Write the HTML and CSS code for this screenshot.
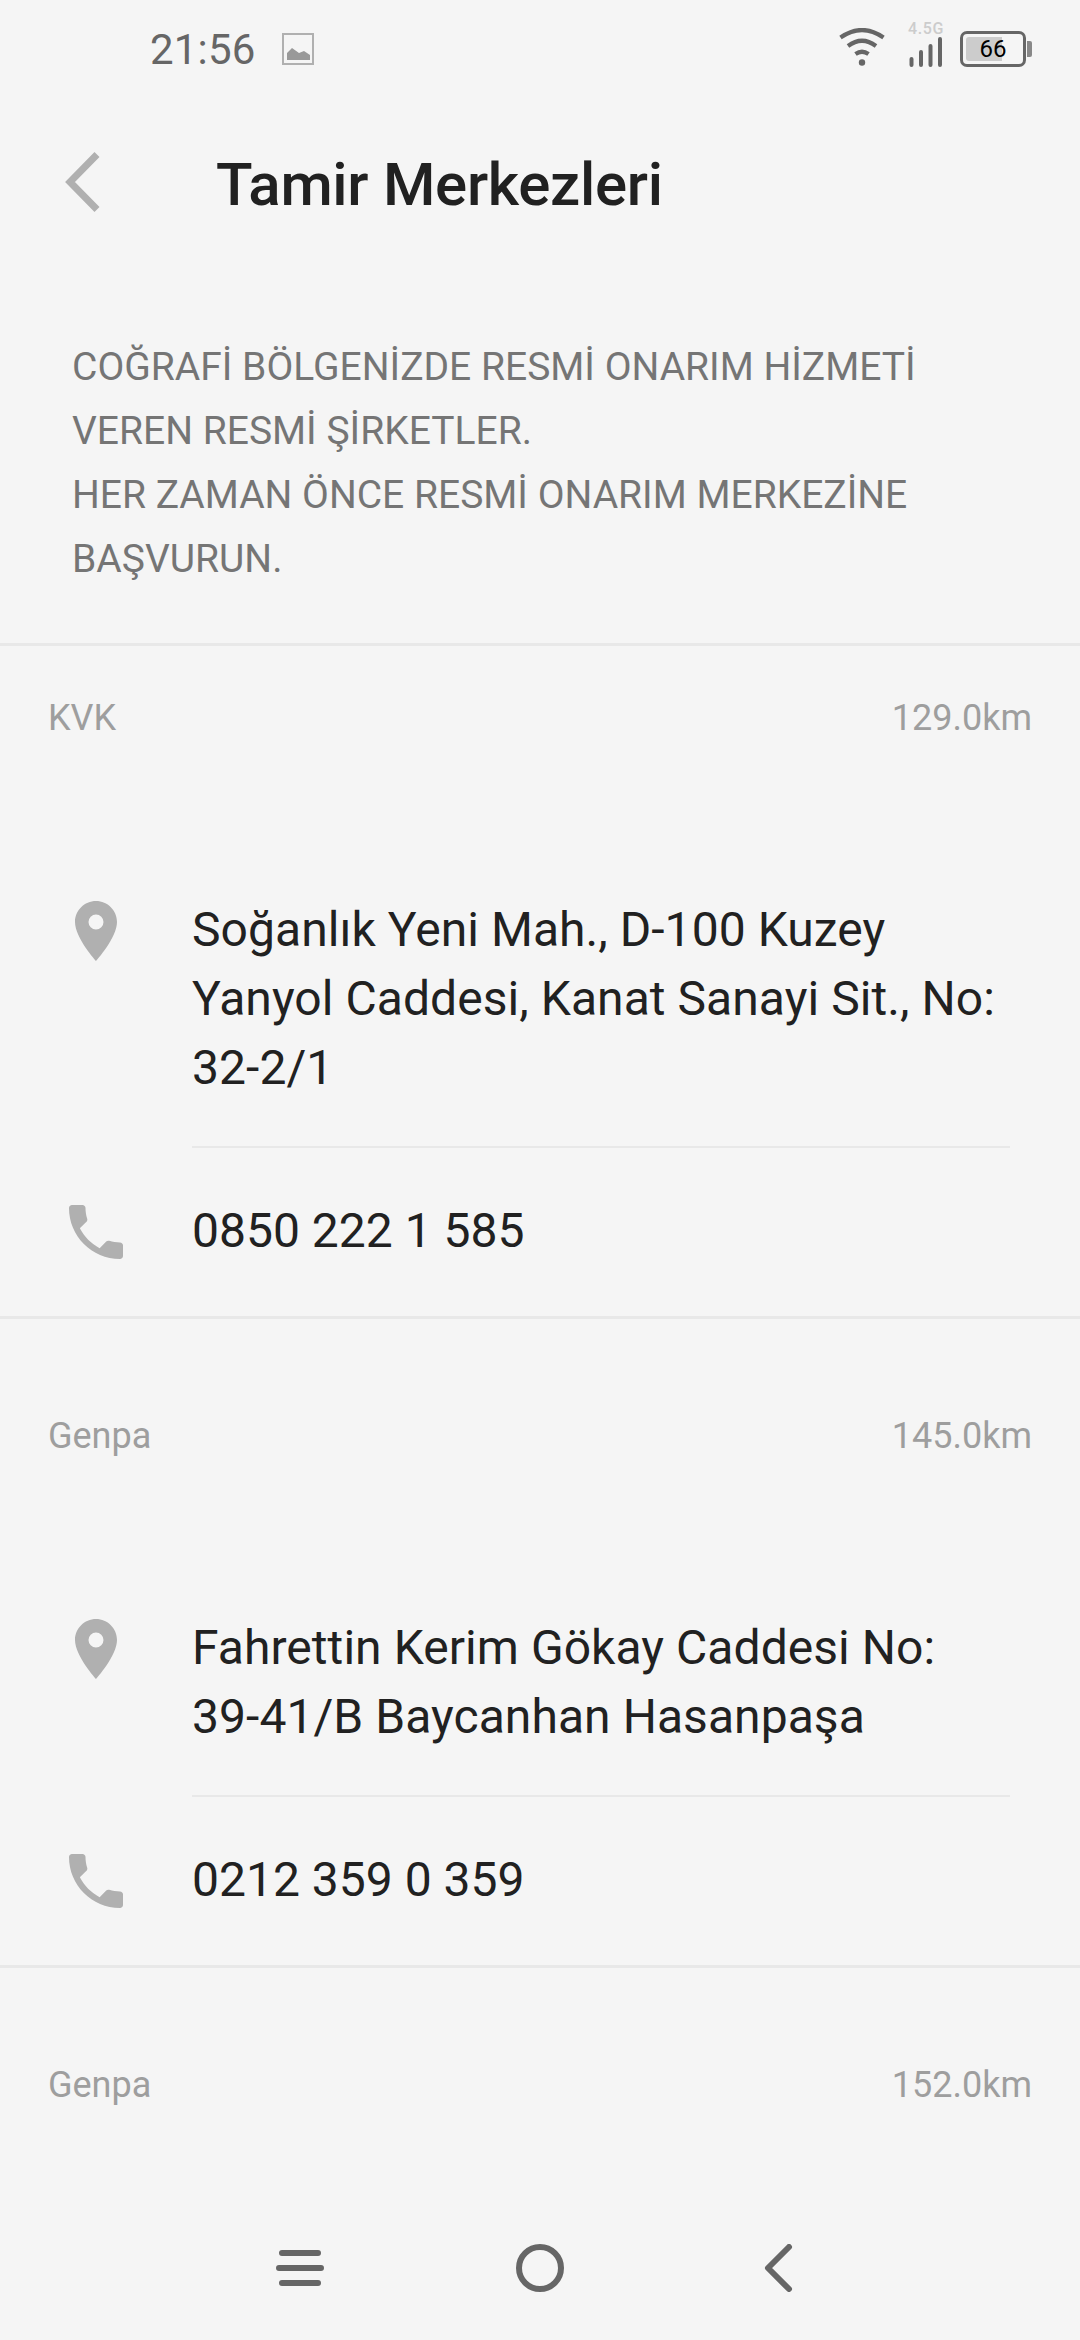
FILE: index.html
```html
<!DOCTYPE html>
<html lang="tr">
<head>
<meta charset="utf-8">
<title>Tamir Merkezleri</title>
<link rel="stylesheet" href="styles.css">
</head>
<body>
<div class="screen">
  <header class="status">
    <span class="clock">21:56</span>
    <svg class="picture" viewBox="0 0 32 32"><rect x="1" y="1" width="30" height="30" fill="none" stroke="#b0b0b0" stroke-width="2"/><path d="M5 27v-7l5-5 7 5 5-2 6 4v5z" fill="#999"/></svg>
    <svg class="wifi" viewBox="0 0 46 38"><g fill="none" stroke="#666" stroke-width="4.200"><path d="M1.500 9.500Q23-5.500 44.500 9.500M9 18Q23 7.500 37 18M16.500 26Q23 21.500 29.500 26"/></g><circle cx="23" cy="34.500" r="3.200" fill="#666"/></svg>
    <div class="signal"><span class="net">4.5G</span><svg class="bars" viewBox="0 0 36 30"><path d="M3.500 22v6M13 15v13M22.500 9v19M32 2v26" stroke="#666" stroke-width="4" stroke-linecap="round"/></svg></div>
    <div class="battery"><span class="level">66</span></div><span class="nub"></span>
  </header>
  <div class="titlebar">
    <svg class="back" viewBox="0 0 36 60"><path d="M32 2.500L5 30l27 27.500" fill="none" stroke="#b0b0b0" stroke-width="7"/></svg>
    <h1>Tamir Merkezleri</h1>
  </div>
  <p class="intro">COĞRAFİ BÖLGENİZDE RESMİ ONARIM HİZMETİ<br>VEREN RESMİ ŞİRKETLER.<br>HER ZAMAN ÖNCE RESMİ ONARIM MERKEZİNE<br>BAŞVURUN.</p>
  <section class="center first">
    <div class="head"><span>KVK</span><span>129.0km</span></div>
    <div class="address"><svg class="icon" viewBox="0 0 24 24"><path d="M12 2C8.130 2 5 5.130 5 9c0 5.250 7 13 7 13s7-7.750 7-13c0-3.870-3.130-7-7-7zm0 9.500a2.500 2.500 0 1 1 0-5 2.500 2.500 0 0 1 0 5z"/></svg><p>Soğanlık Yeni Mah., D-100 Kuzey<br>Yanyol Caddesi, Kanat Sanayi Sit., No:<br>32-2/1</p></div>
    <div class="phone"><svg class="icon" viewBox="0 0 24 24"><path d="M6.620 10.790c1.440 2.830 3.760 5.140 6.590 6.590l2.200-2.200c.27-.27.67-.36 1.020-.24 1.120.37 2.330.57 3.570.57.55 0 1 .45 1 1V20c0 .55-.45 1-1 1-9.390 0-17-7.610-17-17 0-.55.45-1 1-1h3.500c.55 0 1 .45 1 1 0 1.250.2 2.450.57 3.570.11.35.03.74-.25 1.020z"/></svg><span>0850 222 1 585</span></div>
  </section>
  <section class="center">
    <div class="head"><span>Genpa</span><span>145.0km</span></div>
    <div class="address"><svg class="icon" viewBox="0 0 24 24"><path d="M12 2C8.130 2 5 5.130 5 9c0 5.250 7 13 7 13s7-7.750 7-13c0-3.870-3.130-7-7-7zm0 9.500a2.500 2.500 0 1 1 0-5 2.500 2.500 0 0 1 0 5z"/></svg><p>Fahrettin Kerim Gökay Caddesi No:<br>39-41/B Baycanhan Hasanpaşa</p></div>
    <div class="phone"><svg class="icon" viewBox="0 0 24 24"><path d="M6.620 10.790c1.440 2.830 3.760 5.140 6.590 6.590l2.200-2.200c.27-.27.67-.36 1.020-.24 1.120.37 2.330.57 3.570.57.55 0 1 .45 1 1V20c0 .55-.45 1-1 1-9.390 0-17-7.610-17-17 0-.55.45-1 1-1h3.500c.55 0 1 .45 1 1 0 1.250.2 2.450.57 3.570.11.35.03.74-.25 1.020z"/></svg><span>0212 359 0 359</span></div>
  </section>
  <section class="center last">
    <div class="head"><span>Genpa</span><span>152.0km</span></div>
  </section>
  <nav class="nav">
    <svg viewBox="0 0 48 48"><path d="M6 9h36M3 24h42M6 39h36"/></svg>
    <svg viewBox="0 0 48 48"><circle cx="24" cy="24" r="21"/></svg>
    <svg viewBox="0 0 48 48"><path d="M33 3L12 24l21 21"/></svg>
  </nav>
</div>
</body>
</html>
```
FILE: styles.css
```css
* { box-sizing: border-box; }
body { margin: 0; background: #f5f5f5; font-family: Roboto, sans-serif; color: #212121; }
p, h1 { margin: 0; }
svg { display: block; flex: none; }
.screen { width: 1080px; height: 2340px; display: flex; flex-direction: column; overflow: hidden; }
.status { height: 98px; flex: none; display: flex; align-items: center; padding: 0 48px 0 150px; }
.clock { font-size: 42px; color: #666; width: 132px; padding-top: 1px; letter-spacing: 0.2px; }
.picture { width: 32px; height: 32px; }
.wifi { width: 46px; height: 38px; margin-left: auto; margin-bottom: 4px; }
.signal { width: 36px; height: 46px; margin-left: 23px; margin-bottom: 11px; display: flex; flex-direction: column; justify-content: space-between; }
.net { font-size: 16px; line-height: 16px; font-weight: 500; letter-spacing: 0.6px; color: #ccc; }
.bars { width: 36px; height: 30px; }
.battery { width: 66px; height: 36px; flex: none; margin-left: 16px; border: 3px solid #666; border-radius: 7px; padding: 3px; }
.level { display: block; height: 24px; font-size: 24px; line-height: 24px; text-align: center; border-radius: 3px; color: #000; background: linear-gradient(90deg, #ccc 66%, transparent 66%); }
.nub { width: 5px; height: 16px; margin-left: 1px; background: #888; border-radius: 0 2px 2px 0; }
.titlebar { height: 171px; flex: none; display: flex; align-items: center; padding: 0 65px; }
.back { width: 36px; height: 60px; margin-bottom: 3px; }
h1 { font-size: 60px; font-weight: 500; letter-spacing: -0.3px; margin-left: 115px; padding-top: 2px; }
.intro { height: 377px; flex: none; padding: 66px 72px 0; font-size: 39px; line-height: 64px; color: #757575; border-bottom: 3px solid #e8e8e8; }
.center { flex: none; padding-top: 69px; border-bottom: 3px solid #e8e8e8; }
.first { padding-top: 24px; }
.last { border: 0; flex: 1; }
.head { height: 96px; display: flex; justify-content: space-between; align-items: center; padding: 0 48px; font-size: 36px; color: #9e9e9e; }
.address { display: flex; margin-top: 129px; padding-left: 60px; }
.icon { width: 72px; height: 72px; fill: #b0b0b0; }
.address p { margin-left: 60px; width: 818px; padding-bottom: 44px; border-bottom: 2px solid #e8e8e8; font-size: 48px; line-height: 69px; letter-spacing: 0.06px; }
.phone { height: 168px; display: flex; align-items: center; padding-left: 60px; gap: 60px; font-size: 48px; }
.phone span { padding-bottom: 4px; }
.nav { height: 144px; flex: none; display: flex; justify-content: space-between; align-items: center; padding: 0 276px; }
.nav svg { width: 48px; height: 48px; fill: none; stroke: #666; stroke-width: 6px; stroke-linecap: round; stroke-linejoin: round; }
```
